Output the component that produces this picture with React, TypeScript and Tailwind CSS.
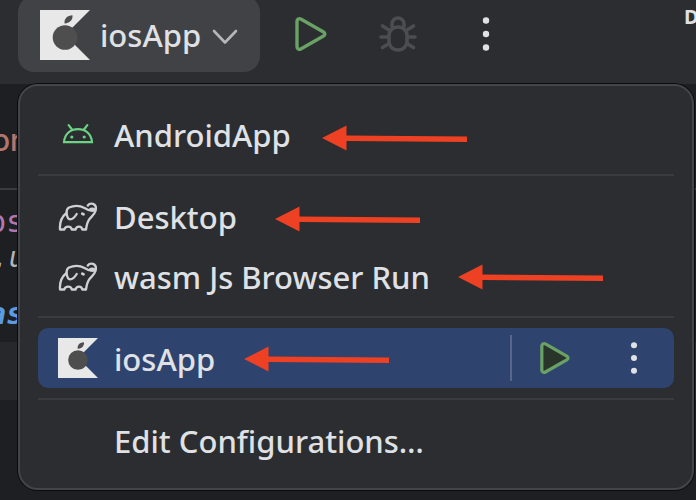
import React from "react";

function KotlinAppleIcon({ className }: { className: string }) {
  return (
    <svg viewBox="0 0 50 50" className={className} aria-hidden="true">
      <path d="M0 0H50L25 25L50 50H0Z" fill="#e8e8e8" />
      <circle cx="25" cy="27.5" r="12.3" fill="#4e4e4e" />
      <path d="M24.5 13.5C24 8.500 27.500 5.500 32.500 5.300C33 10 29.500 13.500 24.500 13.500Z" fill="#4e4e4e" />
    </svg>
  );
}

function PlayIcon({ className, fill }: { className: string; fill: string }) {
  return (
    <svg viewBox="0 0 34 36" className={className} aria-hidden="true">
      <path
        d="M3 5.200V30.800C3 32.900 5 33.900 6.800 32.900L29.500 20C31.300 18.900 31.300 17.100 29.500 16L6.800 3.100C5 2.100 3 3.100 3 5.200Z"
        fill={fill}
        stroke="#6aa165"
        strokeWidth="3.4"
      />
    </svg>
  );
}

function BugIcon() {
  return (
    <svg viewBox="0 0 40 38" className="h-[38px] w-10" fill="none" stroke="#4c4d4f" strokeWidth="3.600" strokeLinecap="round" aria-hidden="true">
      <rect x="11" y="12" width="18" height="23" rx="8.500" />
      <path d="M14 11.500V9a6 6 0 0 1 12 0v2.500M3 22h7M30 22h7M4.500 11l6.500 4M35.500 11l-6.500 4M4.500 32.500l6.500-4M35.500 32.500l-6.500-4" />
    </svg>
  );
}

function DotsIcon({ className }: { className: string }) {
  return (
    <svg viewBox="0 0 8 36" className={className} fill="#dfe1e5" aria-hidden="true">
      <circle cx="4" cy="4.500" r="3.200" />
      <circle cx="4" cy="18" r="3.200" />
      <circle cx="4" cy="31.500" r="3.200" />
    </svg>
  );
}

function AndroidIcon() {
  return (
    <svg viewBox="0 0 32 22" className="h-[22px] w-8" fill="none" stroke="#6cd284" strokeWidth="2.200" strokeLinecap="round" aria-hidden="true">
      <path d="M2 18.200C2.500 10.500 8 5.200 16 5.200S29.500 10.500 30 18.200Z" />
      <path d="M10 5.500L6.700 1.200M22 5.500L25.300 1.200" />
      <circle cx="9.800" cy="13" r="1.600" fill="#6cd284" stroke="none" />
      <circle cx="22.200" cy="13" r="1.600" fill="#6cd284" stroke="none" />
    </svg>
  );
}

function GradleIcon() {
  return (
    <svg viewBox="0 0 40 30" className="h-[30px] w-10" fill="none" stroke="#ced0d6" strokeWidth="2.300" strokeLinecap="round" strokeLinejoin="round" aria-hidden="true">
      <path d="M29.800 3.500C31 1.800 33 1.300 35 1.800C37.500 2.600 38.400 5.500 37.500 9C36.500 12.500 33.500 14.500 31.500 17C29.500 19.500 28.700 22.500 28 27.500H24.200C23.800 23.700 18.300 23.700 17.600 27.500H13.800C13.200 23.700 7.300 23.700 6.300 27.500H2C1.500 20.500 4 14.500 8.500 11C8.500 8.500 9 6.500 11 5.500C16 3.300 22 3.500 26.500 6C30 8.200 33.500 9.500 36.500 8.300C35.700 6.500 33.800 6.200 32.300 7" />
      <path d="M8.500 11C9 14.500 10 17.300 12 17.300C15 17.300 17.200 14.500 18.700 12" />
      <path d="M24.300 11.800L25.500 12.300" strokeWidth="2.800" />
    </svg>
  );
}

function Separator() {
  return <hr className="my-[10px] h-0.5 border-0 bg-[#3a3b3f]" />;
}

function MenuItem({ icon, label }: { icon?: React.ReactNode; label: string }) {
  return (
    <button role="menuitem" className="flex h-[60px] w-full items-center rounded-[10px] pt-0.5 text-left">
      <span className="flex w-20 shrink-0 justify-center">{icon}</span>
      <span className="-ml-1 whitespace-nowrap">{label}</span>
    </button>
  );
}

function CodeBackdrop() {
  return (
    <main className="flex-1 overflow-hidden text-[30px] leading-10">
      <p className="-ml-2 mt-9 font-['Inter',sans-serif] text-[#b3766d]">or</p>
      <div className="mt-7 h-0.5 bg-[#393b40]" />
      <p className="-ml-3 mt-3 font-['DejaVu_Sans_Mono',monospace] text-[#b178b0]">ps</p>
      <p className="-ml-2 font-['DejaVu_Sans_Mono',monospace] text-[28px] italic leading-8 text-[#b5b6b8]">.u</p>
      <p className="-ml-3 mt-5 font-['DejaVu_Sans_Mono',monospace] font-bold italic text-[#5b9be0]">as</p>
      <div className="mt-2 h-[58px] bg-[#26282c]" />
    </main>
  );
}

function Arrows() {
  const tips = [
    [322, 138],
    [275, 219],
    [458, 277],
    [244, 359],
  ];
  return (
    <svg viewBox="0 0 696 500" className="pointer-events-none absolute left-0 top-0 h-[500px] w-[696px]" aria-hidden="true">
      {tips.map(([x, y]) => (
        <path
          key={x}
          transform={`translate(${x} ${y})`}
          d="M0 0L24.500-12.500V-2.500L145-1.500V4L24.500 3V12.500Z"
          fill="#ee4023"
        />
      ))}
    </svg>
  );
}

export default function App() {
  return (
    <div className="relative flex h-screen flex-col overflow-hidden bg-[#1e1f22] font-['Noto_Sans','Open_Sans',sans-serif] text-[31px] font-medium leading-10 text-[#dfe1e5]">
      <header className="flex h-[84px] shrink-0 items-start overflow-hidden bg-[#2b2d30] pl-[18px]">
        <button className="-mt-1 flex h-[76px] w-[242px] shrink-0 items-center rounded-[16px] bg-[#414245] pl-[22px] pt-0.5">
          <KotlinAppleIcon className="size-[50px] shrink-0" />
          <span className="ml-[10px] w-[100px]">iosApp</span>
          <svg viewBox="0 0 28 18" className="ml-[11px] mt-1 h-[18px] w-7 shrink-0" fill="none" stroke="#b4b6ba" strokeWidth="2.600" strokeLinecap="round" strokeLinejoin="round" aria-hidden="true">
            <path d="M3 3L14 14.500L25 3" />
          </svg>
        </button>
        <div className="flex h-[68px] flex-1 items-center">
          <button aria-label="Run" className="ml-[34px]">
            <PlayIcon className="h-9 w-[34px]" fill="none" />
          </button>
          <button aria-label="Debug" className="ml-[50px]">
            <BugIcon />
          </button>
          <button aria-label="More actions" className="ml-16">
            <DotsIcon className="h-9 w-2" />
          </button>
        </div>
        <span className="-mr-2 w-5 text-xl font-bold leading-[34px]">D</span>
      </header>
      <CodeBackdrop />
      <div role="menu" className="absolute left-[18px] right-0.5 top-[84px] rounded-[20px] border-2 border-[#43454a] bg-[#2b2d30] p-[18px] shadow-[0_0_0_1px_#0b0b0c]">
        <MenuItem icon={<AndroidIcon />} label="AndroidApp" />
        <Separator />
        <MenuItem icon={<GradleIcon />} label="Desktop" />
        <MenuItem icon={<GradleIcon />} label="wasm Js Browser Run" />
        <Separator />
        <div className="flex h-[60px] items-center rounded-[10px] bg-[#2e436e]">
          <button role="menuitem" className="flex h-full flex-1 items-center text-left">
            <span className="flex w-[76px] shrink-0 pl-5">
              <KotlinAppleIcon className="size-10" />
            </span>
            <span className="pt-0.5">iosApp</span>
          </button>
          <span className="mr-[27px] h-[46px] w-0.5 bg-[#576789]" />
          <button aria-label="Run iosApp" className="mr-[59px]">
            <PlayIcon className="h-9 w-8" fill="#29352b" />
          </button>
          <button aria-label="More options for iosApp" className="mr-9">
            <DotsIcon className="h-[34px] w-2" />
          </button>
        </div>
        <Separator />
        <MenuItem label="Edit Configurations…" />
      </div>
      <Arrows />
    </div>
  );
}
